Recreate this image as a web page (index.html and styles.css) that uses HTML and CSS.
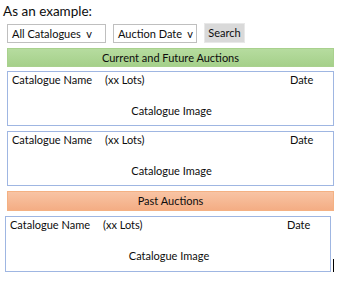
FILE: index.html
```html
<!DOCTYPE html>
<html lang="en">
<head>
  <meta charset="UTF-8">
  <title>Auction Catalogues</title>
  <link rel="stylesheet" href="styles.css">
</head>
<body>
  <div class="page">
    <p class="intro">As an example:</p>

    <div class="filters">
      <div class="select catalogues">All Catalogues&nbsp; v</div>
      <div class="select dates">Auction Date&nbsp; v</div>
      <button class="search">Search</button>
    </div>

    <div class="banner current">Current and Future Auctions</div>

    <div class="card">
      <div class="card-head">
        <span class="name">Catalogue Name</span>
        <span class="lots">(xx Lots)</span>
        <span class="date">Date</span>
      </div>
      <div class="card-image">Catalogue Image</div>
    </div>

    <div class="card">
      <div class="card-head">
        <span class="name">Catalogue Name</span>
        <span class="lots">(xx Lots)</span>
        <span class="date">Date</span>
      </div>
      <div class="card-image">Catalogue Image</div>
    </div>

    <div class="banner past">Past Auctions</div>

    <div class="last-row">
      <div class="card">
        <div class="card-head">
          <span class="name">Catalogue Name</span>
          <span class="lots">(xx Lots)</span>
          <span class="date">Date</span>
        </div>
        <div class="card-image">Catalogue Image</div>
      </div>
      <span class="caret"></span>
    </div>
  </div>
</body>
</html>
```

FILE: styles.css
```css
body {
  margin: 0;
  background: #ffffff;
  font-family: Lato, "Liberation Sans", sans-serif;
  color: #0d0d0d;
}
.page {
  padding: 2px 8px 0 7px;
  width: 327px;
}
.intro {
  margin: 0 0 0 -4px;
  font-size: 13.5px;
  line-height: 18px;
}
.filters {
  display: flex;
  align-items: center;
  gap: 7px;
  margin-top: 4px;
}
.select {
  box-sizing: border-box;
  height: 19px;
  border: 1px solid #bfbfbf;
  padding: 0 4px;
  font-size: 11px;
  line-height: 17px;
  white-space: nowrap;
}
.catalogues {
  width: 99px;
}
.dates {
  width: 84px;
}
.search {
  box-sizing: border-box;
  width: 41px;
  height: 20px;
  padding: 0;
  border: 1px solid #e8e8e8;
  background: #d9d9d9;
  font-family: inherit;
  font-size: 11px;
  color: #0d0d0d;
  margin-top: -2px;
}
.banner {
  height: 17px;
  margin-top: 5px;
  text-align: center;
  font-size: 11px;
  line-height: 17px;
}
.current {
  background: linear-gradient(#b6dc9f, #a5d08a);
  border: 1px solid #a9d18e;
}
.past {
  height: 18px;
  background: linear-gradient(#f8c4a4, #f4ad84);
  border: 1px solid #f4b183;
}
.card {
  height: 53px;
  margin-top: 4px;
  border: 1px solid #9fb6e2;
  font-size: 11px;
}
.card + .card {
  margin-top: 5px;
}
.card-head {
  display: flex;
  padding: 1px 0 0 4px;
  line-height: 13px;
}
.name {
  width: 93px;
}
.lots {
  flex: 1;
}
.date {
  width: 43px;
}
.card-image {
  text-align: center;
  margin-top: 18px;
  padding-left: 2px;
}
.last-row {
  display: flex;
  align-items: flex-end;
  margin: 5px 0 0 -2px;
}
.last-row .card {
  flex: 1;
  height: 54px;
  margin-top: 0;
}
.caret {
  width: 1px;
  height: 13px;
  background: #000000;
  margin-left: 2px;
}
```
